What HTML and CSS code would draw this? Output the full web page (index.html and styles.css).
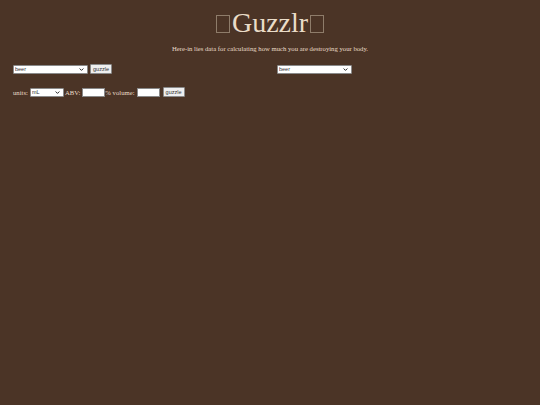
FILE: index.html
```html
<!DOCTYPE html>
<html>
<head>
<meta charset="utf-8">
<link rel="stylesheet" href="styles.css">
</head>
<body>
<h1 class="title"><span class="tofu"></span>Guzzlr<span class="tofu"></span></h1>
<p class="tagline">Here-in lies data for calculating how much you are destroying your body.</p>
<div class="pickers">
  <div class="col">
    <select class="drink"><option>beer</option></select>
    <button class="btn">guzzle</button>
  </div>
  <div class="col">
    <select class="drink"><option>beer</option></select>
  </div>
</div>
<div class="custom">
  <span>units:</span>
  <select class="units"><option>mL</option></select>
  <span>ABV:</span>
  <input class="num" type="text">
  <span>% volume:</span>
  <input class="num" type="text">
  <button class="btn">guzzle</button>
</div>
</body>
</html>
```
FILE: styles.css
```css
html, body {
  margin: 0;
  padding: 0;
  background: #4b3426;
  color: #eadcc8;
  font-family: "Liberation Serif", "Times New Roman", serif;
  height: 100%;
}
.title {
  margin: 0;
  padding-top: 8px;
  text-align: center;
  font-weight: normal;
  font-size: 28px;
  line-height: 30px;
  display: flex;
  justify-content: center;
  align-items: center;
  gap: 2px;
}
.tofu {
  display: inline-block;
  width: 12px;
  height: 16px;
  border: 1px solid #8e7c6a;
  margin-top: 1px;
}
.tagline {
  margin: 6px 0 0;
  text-align: center;
  font-size: 6.7px;
  line-height: 9px;
}
.pickers {
  display: grid;
  grid-template-columns: 1fr 1fr;
  column-gap: 14px;
  padding: 0 13px;
  margin-top: 11px;
}
.col {
  display: flex;
  align-items: center;
  gap: 2px;
}
select, input, button {
  font-family: "Liberation Sans", Arial, sans-serif;
  font-size: 5.5px;
  box-sizing: border-box;
  margin: 0;
  color: #333;
}
select {
  -webkit-appearance: none;
  appearance: none;
  background: #fff url("data:image/svg+xml,%3Csvg xmlns='http://www.w3.org/2000/svg' width='6' height='4' viewBox='0 0 6 4'%3E%3Cpath d='M0.5 0.7 L3 3.2 L5.5 0.7' fill='none' stroke='%23222' stroke-width='1.3'/%3E%3C/svg%3E") no-repeat right 3px center;
  background-size: 5px 3px;
  border: 1px solid #8a8a8a;
  border-radius: 1px;
  line-height: 7px;
}
.drink {
  width: 75px;
  height: 9px;
  padding: 0 1px;
}
.btn {
  height: 10px;
  padding: 0;
  line-height: 8px;
  width: 22px;
  background: #efefef;
  border: 1px solid #8a8a8a;
  border-radius: 1px;
}
.custom {
  display: flex;
  align-items: center;
  padding: 0 13px;
  margin-top: 13px;
  font-size: 6.7px;
}
.units {
  width: 34px;
  height: 9px;
  margin: 0 1px 0 2px;
  padding: 0 1px;
}
.num {
  width: 23px;
  height: 9px;
  margin: 0 0 0 2px;
  padding: 0;
  border: 1px solid #888;
  background: #fff;
}
.custom .btn { margin-left: 3px; }
```
